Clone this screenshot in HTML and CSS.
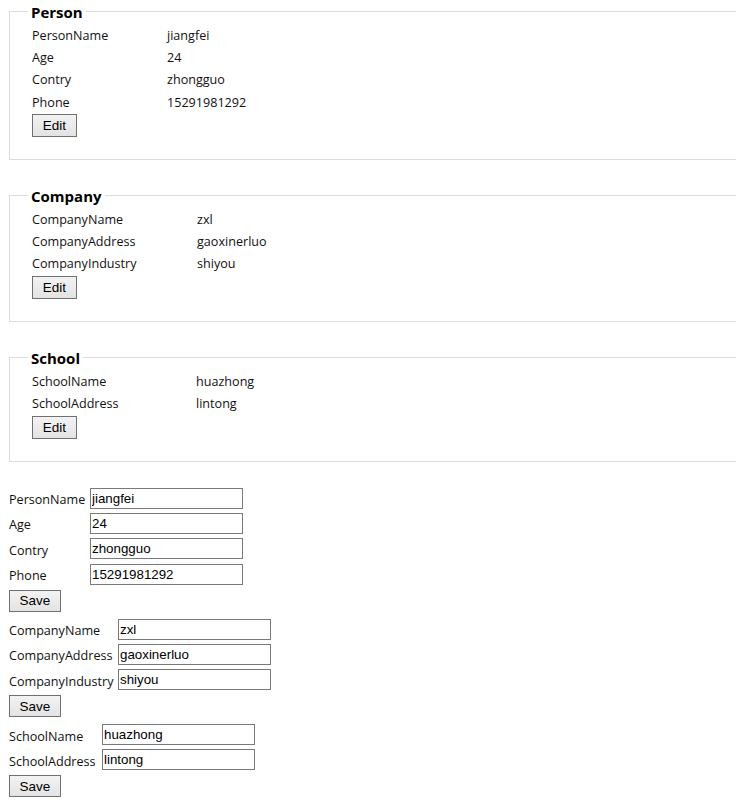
FILE: index.html
```html
<!DOCTYPE html>
<html>
<head>
<meta charset="utf-8">
<link rel="stylesheet" href="styles.css">
</head>
<body>
<div class="page">
  <fieldset class="box box-person">
    <legend>Person</legend>
    <div class="rows">
      <span>PersonName</span><span>jiangfei</span>
      <span>Age</span><span>24</span>
      <span>Contry</span><span>zhongguo</span>
      <span>Phone</span><span>15291981292</span>
    </div>
    <button class="btn btn-edit">Edit</button>
  </fieldset>

  <fieldset class="box box-company">
    <legend>Company</legend>
    <div class="rows">
      <span>CompanyName</span><span>zxl</span>
      <span>CompanyAddress</span><span>gaoxinerluo</span>
      <span>CompanyIndustry</span><span>shiyou</span>
    </div>
    <button class="btn btn-edit">Edit</button>
  </fieldset>

  <fieldset class="box box-school">
    <legend>School</legend>
    <div class="rows">
      <span>SchoolName</span><span>huazhong</span>
      <span>SchoolAddress</span><span>lintong</span>
    </div>
    <button class="btn btn-edit">Edit</button>
  </fieldset>

  <form class="form form-person">
    <div class="fields">
      <label>PersonName</label><input type="text" value="jiangfei">
      <label>Age</label><input type="text" value="24">
      <label>Contry</label><input type="text" value="zhongguo">
      <label>Phone</label><input type="text" value="15291981292">
    </div>
    <button type="button" class="btn btn-save">Save</button>
  </form>

  <form class="form form-company">
    <div class="fields">
      <label>CompanyName</label><input type="text" value="zxl">
      <label>CompanyAddress</label><input type="text" value="gaoxinerluo">
      <label>CompanyIndustry</label><input type="text" value="shiyou">
    </div>
    <button type="button" class="btn btn-save">Save</button>
  </form>

  <form class="form form-school">
    <div class="fields">
      <label>SchoolName</label><input type="text" value="huazhong">
      <label>SchoolAddress</label><input type="text" value="lintong">
    </div>
    <button type="button" class="btn btn-save">Save</button>
  </form>
</div>
</body>
</html>
```
FILE: styles.css
```css
html, body {
  margin: 0;
  padding: 0;
  background: #ffffff;
}

body {
  font-family: "Open Sans", "Noto Sans", sans-serif;
  font-size: 12.6px;
  color: #111;
}

.page {
  padding: 2px 0 0 9px;
}

.box {
  margin: 0 0 26px 0;
  padding: 4px 22px 22px 22px;
  border: 1px solid #dcdcdc;
  border-right: none;
  min-width: 0;
}

.box legend {
  margin-left: -4px;
  padding: 2px 3px 0 3px;
  font-weight: 700;
  font-size: 15px;
  line-height: 16px;
  color: #000;
}

.rows {
  display: grid;
  grid-auto-rows: 22.3px;
  align-items: center;
}

.box-person .rows { grid-template-columns: 135px auto; }
.box-company .rows { grid-template-columns: 165px auto; }
.box-school .rows { grid-template-columns: 164px auto; }

.btn {
  display: block;
  margin: 0;
  padding: 0;
  font-family: "Liberation Sans", Arial, sans-serif;
  font-size: 13.5px;
  color: #000;
  border: 1px solid #707070;
  border-radius: 0;
  background: linear-gradient(#f3f3f3, #e3e3e3);
  height: 23px;
}

.btn-edit {
  width: 45px;
  margin-top: 1px;
}

.btn-save {
  width: 52px;
  height: 22px;
  margin-top: 5px;
}

.form {
  margin: 0 0 7px 0;
}

.fields {
  display: grid;
  row-gap: 4.3px;
  align-items: center;
}

.form-person .fields { grid-template-columns: 81px auto; }
.form-company .fields { grid-template-columns: 109px auto; }
.form-school .fields { grid-template-columns: 93px auto; }

.fields label {
  padding-top: 3px;
}

.fields input {
  width: 153px;
  height: 21px;
  box-sizing: border-box;
  margin: 0;
  padding: 0 1px;
  border: 1px solid #7a7a7a;
  font-family: "Liberation Sans", Arial, sans-serif;
  font-size: 13.33px;
  color: #000;
  outline: none;
}
```
